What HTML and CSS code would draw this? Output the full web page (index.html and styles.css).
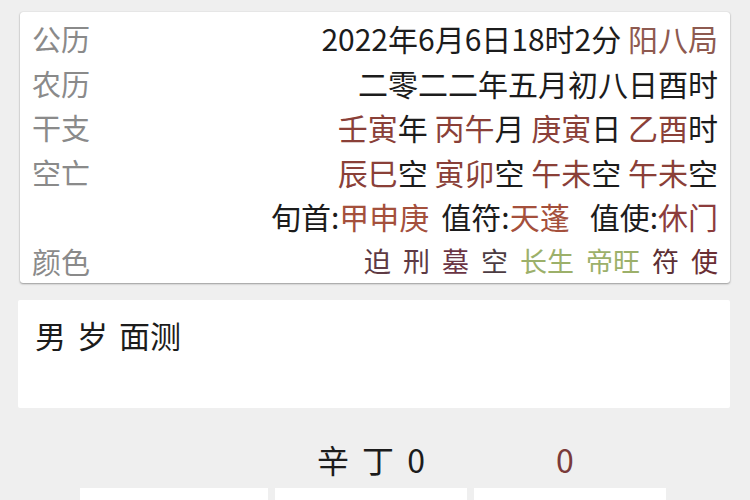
FILE: index.html
```html
<!DOCTYPE html>
<html lang="zh">
<head>
<meta charset="utf-8">
<link rel="stylesheet" href="styles.css">
</head>
<body>
<div class="page">
  <div class="card info">
    <div class="row"><span class="label">公历</span><span class="val">2022年6月6日18时2分 <span class="c-ju">阳八局</span></span></div>
    <div class="row"><span class="label">农历</span><span class="val">二零二二年五月初八日酉时</span></div>
    <div class="row"><span class="label">干支</span><span class="val"><span class="c-red">壬寅</span>年 <span class="c-red">丙午</span>月 <span class="c-red">庚寅</span>日 <span class="c-red">乙酉</span>时</span></div>
    <div class="row"><span class="label">空亡</span><span class="val"><span class="c-red">辰巳</span>空 <span class="c-red">寅卯</span>空 <span class="c-red">午未</span>空 <span class="c-red">午未</span>空</span></div>
    <div class="row"><span class="label"></span><span class="val">旬首:<span class="c-or">甲申庚</span><span class="gap1">值符:</span><span class="c-or">天蓬</span><span class="gap2">值使:</span><span class="c-men">休门</span></span></div>
    <div class="row"><span class="label">颜色</span><span class="colors"><span class="c-dk">迫</span><span class="c-dk">刑</span><span class="c-mu">墓</span><span class="c-gy">空</span><span class="c-gr">长生</span><span class="c-gr">帝旺</span><span class="c-fu">符</span><span class="c-sh">使</span></span></div>
  </div>
  <div class="card note">男 岁 面测</div>
  <div class="grid-text">
    <span></span>
    <span class="cell">辛 丁 0</span>
    <span class="cell c-zero">0</span>
  </div>
  <div class="grid-boxes">
    <div class="box"></div>
    <div class="box"></div>
    <div class="box"></div>
  </div>
</div>
</body>
</html>
```

FILE: styles.css
```css
html, body {
  margin: 0;
  padding: 0;
  height: 500px;
  overflow: hidden;
}
body {
  background: #efefef;
  font-family: "Noto Sans CJK SC", "Noto Sans", sans-serif;
  color: #1c1c1c;
}
.page {
  padding: 12px 20px 0 18px;
}
.card {
  background: #fff;
}
.info {
  margin-left: 2px;
  padding-top: 4px;
  border-radius: 3px;
  box-shadow: 0 1px 2px rgba(0, 0, 0, 0.35), 0 0 1px rgba(0, 0, 0, 0.2);
}
.row {
  height: 44.5px;
  display: flex;
  align-items: center;
  justify-content: space-between;
  padding: 0 12px 0 12px;
  font-size: 30px;
  line-height: 44.5px;
  white-space: pre;
}
.label {
  color: #8a8a8a;
  font-size: 29px;
}
.val {
  color: #1c1c1c;
}
.c-ju { color: #8e5a50; }
.c-red { color: #8a4038; }
.c-or { color: #a4503c; }
.c-men { color: #8c3c3c; }
.gap1 { margin-left: 12px; }
.gap2 { margin-left: 20px; }
.colors {
  display: flex;
  gap: 12px;
  font-size: 27px;
}
.c-dk { color: #5e3a44; }
.c-mu { color: #6a3444; }
.c-gy { color: #4c3c42; }
.c-gr { color: #9cb06a; }
.c-fu { color: #5c3034; }
.c-sh { color: #6a2e34; }
.note {
  margin-top: 17px;
  height: 108px;
  box-sizing: border-box;
  padding: 14px 17px;
  font-size: 31px;
  line-height: 42px;
  word-spacing: 4px;
  color: #1c1c1c;
  border-radius: 2px;
}
.grid-text {
  margin-top: 31px;
  margin-left: 62px;
  width: 586px;
  display: grid;
  grid-template-columns: 188px 192px 192px;
  column-gap: 7px;
  font-size: 32px;
  line-height: 40px;
  height: 40px;
  color: #1c1c1c;
}
.cell {
  text-align: center;
  white-space: pre;
  word-spacing: 6px;
}
.c-zero {
  color: #7a3a3a;
  padding-right: 10px;
}
.grid-boxes {
  margin-top: 9px;
  margin-left: 62px;
  width: 586px;
  display: grid;
  grid-template-columns: 188px 192px 192px;
  column-gap: 7px;
}
.box {
  background: #fff;
  height: 20px;
}
```
